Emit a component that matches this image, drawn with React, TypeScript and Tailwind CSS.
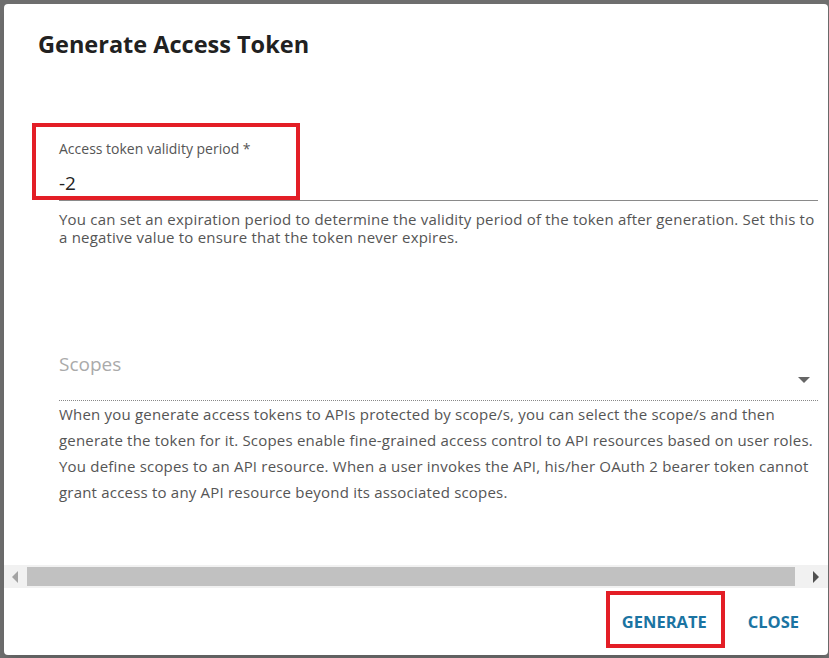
import React from 'react';

export default function App() {
    return (
        <div className="w-[829px] h-[658px] bg-[#6e6e6e] pl-[4px] pt-[4px] overflow-hidden font-['Open_Sans',sans-serif]">
            <div className="relative w-[824px] h-[651px] bg-white rounded-[4px] shadow-lg flex flex-col">
                <h2 className="pl-[34px] pt-[24px] text-[23.5px] leading-[32px] font-bold text-[#212121]">
                    Generate Access Token
                </h2>

                <div className="flex-1 flex flex-col">
                    <div className="pl-[55px] pr-[10px] pt-[80px]">
                        <label className="block text-[14px] leading-[18px] text-[#555]">
                            Access token validity period *
                        </label>
                        <div className="mt-[13px] h-[30px] border-b border-[#8a8a8a] text-[19px] leading-[24px] text-[#222]">
                            -2
                        </div>
                        <p className="mt-[9px] text-[15px] leading-[18px] tracking-[0.2px] text-[#555]">
                            You can set an expiration period to determine the validity period of the token after generation. Set this to a negative value to ensure that the token never expires.
                        </p>

                        <div className="relative mt-[106px] h-[49px] border-b border-dotted border-[#888]">
                            <span className="text-[19px] leading-[24px] text-[#aaa]">Scopes</span>
                            <svg className="absolute right-[8px] top-[25px]" width="12" height="7" viewBox="0 0 12 7">
                                <path d="M0 0 L12 0 L6 6 Z" fill="#666" />
                            </svg>
                        </div>
                        <p className="text-[15px] leading-[26px] tracking-[0.2px] text-[#555]">
                            When you generate access tokens to APIs protected by scope/s, you can select the scope/s and then generate the token for it. Scopes enable fine-grained access control to API resources based on user roles. You define scopes to an API resource. When a user invokes the API, his/her OAuth 2 bearer token cannot grant access to any API resource beyond its associated scopes.
                        </p>
                    </div>

                    {/* horizontal scrollbar */}
                    <div className="mt-auto h-[23px] bg-[#f1f1f1] flex items-center">
                        <div className="w-[23px] h-full flex items-center justify-center">
                            <svg width="7" height="12" viewBox="0 0 7 12">
                                <path d="M6 0 L6 12 L0 6 Z" fill="#a3a3a3" />
                            </svg>
                        </div>
                        <div className="w-[768px] h-[19px] bg-[#c1c1c1]" />
                        <div className="flex-1" />
                        <div className="w-[23px] h-full flex items-center justify-center">
                            <svg width="7" height="12" viewBox="0 0 7 12">
                                <path d="M0 0 L0 12 L6 6 Z" fill="#505050" />
                            </svg>
                        </div>
                    </div>
                </div>

                <div className="h-[67px] flex items-center justify-end gap-[25px] pr-[21px]">
                    <button className="px-[8px] text-[16.5px] leading-[24px] font-bold text-[#1b74a2]">GENERATE</button>
                    <button className="px-[8px] text-[16.5px] leading-[24px] font-bold text-[#1b74a2]">CLOSE</button>
                </div>

                {/* annotation boxes */}
                <div className="absolute left-[28px] top-[119px] w-[268px] h-[77px] border-4 border-[#e31e26]" />
                <div className="absolute left-[602px] top-[587px] w-[119px] h-[57px] border-4 border-[#e31e26]" />
            </div>
        </div>
    );
}
